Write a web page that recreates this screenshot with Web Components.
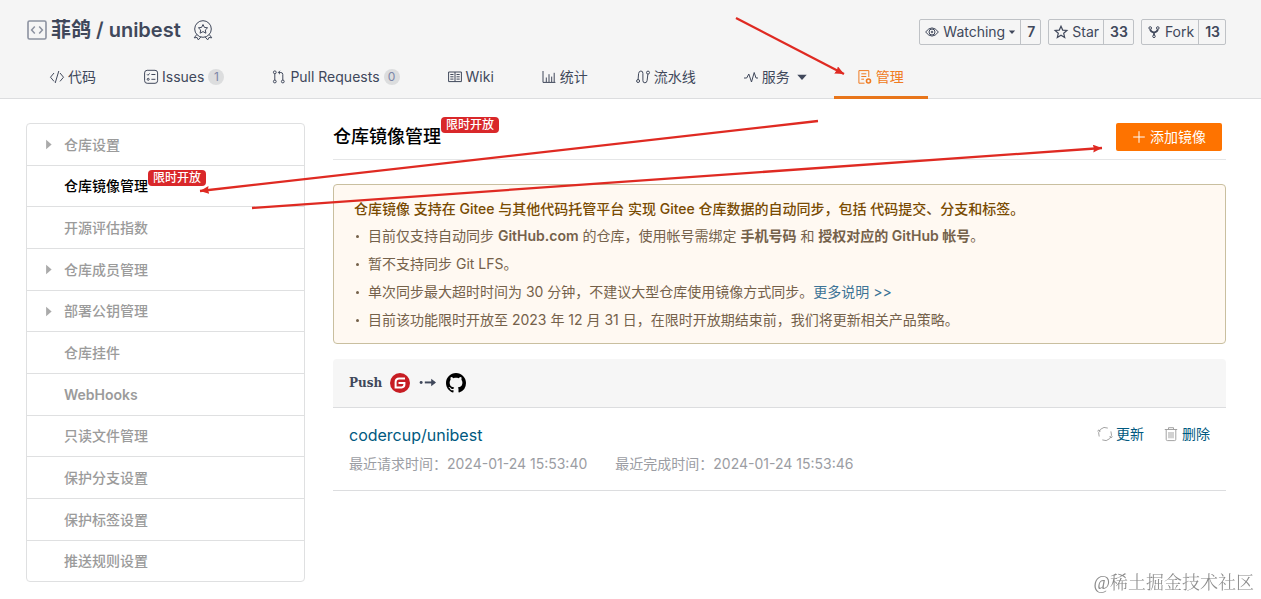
<!DOCTYPE html>
<html lang="zh-CN">
<head>
<meta charset="utf-8">
<title>仓库镜像管理 - 菲鸽/unibest</title>
<style>
  body {
    margin: 0;
    background: #fff;
    color: #40485b;
    font-family: Inter, "Noto Sans CJK SC", sans-serif;
    font-size: 14px;
    line-height: 20px;
  }
  .page {
    display: flex;
    align-items: flex-start;
    gap: 28px;
    padding: 24px 35px 16px 26px;
  }
  side-menu { flex: 0 0 279px; }
  main { flex: 1; min-width: 0; }
</style>
</head>
<body>
<repo-header></repo-header>
<div class="page">
  <side-menu></side-menu>
  <main>
    <page-title>仓库镜像管理</page-title>
    <mirror-notice>
      <span slot="title">仓库镜像 支持在 Gitee 与其他代码托管平台 实现 Gitee 仓库数据的自动同步，包括 代码提交、分支和标签。</span>
    </mirror-notice>
    <mirror-list></mirror-list>
  </main>
</div>
<pointer-arrows></pointer-arrows>
<water-mark>@稀土掘金技术社区</water-mark>

<script>
const ICONS = {
  repo: `<rect x="1" y="1" width="18" height="18" rx="1.5" stroke-width="1.6"/><path d="M7.800 6.500 4.600 10l3.200 3.500M12.200 6.500l3.200 3.500-3.200 3.500" stroke-width="1.500"/>`,
  medal: `<circle cx="10" cy="9" r="8.300"/><path d="m10 4.500 1.400 2.900 3.200.4-2.300 2.200.6 3.200-2.900-1.600-2.900 1.600.6-3.200-2.300-2.200 3.200-.4z"/><path d="m3.800 14.500-2.600 3.300 2.900-.3 1.200 2.400 2.600-3M16.200 14.500l2.600 3.300-2.900-.3-1.200 2.400-2.600-3"/>`,
  code: `<path d="M4 3 .5 7.200 4 11.400M10 3l3.500 4.200L10 11.400M8.800 1 5.200 13"/>`,
  issues: `<rect x=".6" y=".3" width="13" height="13" rx="2.600"/><path d="m3 4.300 1 1 1.600-1.900M7.400 4.500h4M7.400 9.300h4"/><circle cx="4.200" cy="9.300" r="1"/>`,
  pull: `<circle cx="2.800" cy="2.300" r="1.400"/><circle cx="2.800" cy="11.500" r="1.400"/><circle cx="10.800" cy="11.500" r="1.400"/><path d="M2.800 3.700v6.400M10.800 10.100V4.500q0-2-2-2H6.500M8 .8 6.300 2.500 8 4.200"/>`,
  wiki: `<path d="M.6 2h12.800v9.600H.6zM7 2v9.600M2.300 4.500h3.200M2.300 6.800h3.200M2.300 9.100h3.200M8.500 4.500h3.200M8.500 6.800h3.200M8.500 9.100h3.200"/>`,
  stats: `<path d="M1 1v11.400h12.400M4.300 12V7.500M7 12V4.200M9.700 12V6.600M12.200 12V2.800"/>`,
  pipeline: `<circle cx="2.100" cy="11" r="1.500"/><circle cx="12" cy="2.600" r="1.500"/><path d="M2.100 9.500 2.600 3.500Q3 1 4.900 1q2 0 2 2.300v7.300q0 2.200 2 2.200 1.900 0 2.200-2.200l.8-6.500"/>`,
  pulse: `<path d="M0 8h2.700L4.800 4l2.700 8 2.700-9.500L12 8h2"/>`,
  manage: `<path d="M10.800 7V.6H.9v12.600H6.500M3.300 3.800h5M3.300 6.500h5M3.300 9.200h2.700"/><circle cx="10.500" cy="11" r="2" stroke-width="1.600"/>`,
  eye: `<path d="M.6 7Q7-1.200 13.400 7 7 15.200.6 7z"/><circle cx="7" cy="7" r="3"/><circle cx="7" cy="7" r=".8"/>`,
  star: `<path d="m7 1.200 1.700 3.900 4.200.4-3.200 2.800 1 4.200L7 10.300l-3.700 2.200 1-4.200L1.100 5.500l4.200-.4z" stroke-width="1.200"/>`,
  fork: `<circle cx="3.200" cy="3" r="1.300"/><circle cx="10.800" cy="3" r="1.300"/><circle cx="7" cy="11.300" r="1.300"/><path d="M3.200 4.300Q3.500 6.500 7 7.600q3.500-1.100 3.800-3.300M7 7.600v2.600" stroke-width="1.800"/>`,
  plus: `<path d="M7 1.200v11.600M1.200 7h11.600"/>`,
  refresh: `<path d="M1.200 9.500A6.400 6.400 0 0 1 9.800 1.100M12.900 4.400A6.400 6.400 0 0 1 4.300 12.900M-.6 4.200 1 2.900l1.200 1.700M11.700 9.200l1.400 1.800 1.400-1.500" stroke-width=".9"/>`,
  trash: `<path d="M.8 2.500h12.400M4.500 2.300V.7h5v1.600M2.200 2.700v9.700q0 1.200 1.200 1.200h7.200q1.200 0 1.200-1.200V2.700M5 5v6.300M7 5v6.300M9 5v6.300" stroke-width=".9"/>`,
  caret: `<path d="M1.500 4.500h11L7 10.500z" fill="currentColor" stroke="none"/>`,
  right: `<path d="M4 1v12L11 7z" fill="currentColor" stroke="none"/>`,
  arrow: `<circle cx="1" cy="6.500" r="1.300" fill="currentColor" stroke="none"/><path d="M4.200 6.500h8.500" stroke-width="1.700"/><path d="M9.800 3.200v6.600L14 6.500z" fill="currentColor" stroke="none"/>`,
  gitee: `<circle cx="10" cy="10" r="10" fill="#c71d23" stroke="none"/><path d="M15 5.600H9.200Q5.600 5.600 5.600 9.200v5.200h6q2.800 0 2.800-2.800V9.900H8.500" stroke="#fff" stroke-width="2"/>`,
  github: `<path fill="#000" stroke="none" transform="scale(1.25)" d="M8 0C3.580 0 0 3.580 0 8c0 3.540 2.290 6.530 5.470 7.590.4.070.55-.17.55-.38 0-.19-.01-.82-.01-1.490-2.010.37-2.530-.49-2.690-.94-.09-.23-.48-.94-.82-1.130-.28-.15-.68-.52-.01-.53.63-.01 1.080.58 1.230.82.72 1.210 1.870.87 2.330.66.07-.52.28-.87.51-1.070-1.780-.2-3.640-.89-3.640-3.950 0-.87.31-1.590.82-2.150-.08-.2-.36-1.020.08-2.120 0 0 .67-.21 2.200.82.64-.18 1.320-.27 2-.27s1.360.09 2 .27c1.530-1.040 2.200-.82 2.200-.82.44 1.100.16 1.920.08 2.120.51.56.82 1.270.82 2.150 0 3.070-1.870 3.750-3.650 3.950.29.25.54.73.54 1.480 0 1.070-.01 1.930-.01 2.200 0 .21.15.46.55.38A8.010 8.010 0 0 0 16 8c0-4.420-3.580-8-8-8z"/>`,
};
const LARGE = ["repo", "medal", "gitee", "github"];

class UiIcon extends HTMLElement {
  constructor() {
    super();
    this.attachShadow({ mode: "open" });
  }
  connectedCallback() {
    const name = this.getAttribute("name");
    const box = LARGE.includes(name) ? 20 : 14;
    this.shadowRoot.innerHTML = `
    <style>
    :host{
        display:block;
        flex:none;
        width:var(--size, 14px);
        height:var(--size, 14px)
    }
    svg{
        display:block;
        width:100%;
        height:100%;
        overflow:visible
    }
    </style>
    <svg viewBox="0 0 ${box} ${box}" fill="none" stroke="currentColor" aria-hidden="true">${ICONS[name]}</svg>`;
  }
}
customElements.define("ui-icon", UiIcon);

class FeatureBadge extends HTMLElement {
  constructor() {
    super();
    this.attachShadow({ mode: "open" });
    this.shadowRoot.innerHTML = `
    <style>
    :host{
        display:block;
        padding:0 5px;
        border-radius:4px;
        background:#d9282a;
        color:#fff;
        font-size:12px;
        font-weight:500;
        line-height:16px
    }
    </style>
    <slot></slot>`;
  }
}
customElements.define("feature-badge", FeatureBadge);

class NavTab extends HTMLElement {
  constructor() {
    super();
    this.attachShadow({ mode: "open" });
  }
  connectedCallback() {
    const count = this.getAttribute("count");
    this.shadowRoot.innerHTML = `
    <style>
    :host{
        display:block
    }
    a{
        display:flex;
        align-items:center;
        gap:4px;
        height:39px;
        padding:0 24px;
        border-bottom:3px solid transparent;
        color:#40485b;
        text-decoration:none;
        white-space:nowrap
    }
    :host([active]) a{
        border-color:#e8751a;
        color:#f07b22
    }
    .count{
        min-width:8px;
        padding:0 4px;
        border-radius:8px;
        background:#dcddde;
        color:#7c86a8;
        font-size:12px;
        line-height:16px;
        text-align:center
    }
    .caret{
        --size:12px;
        margin:0 2px
    }
    </style>
    <a href="#">
        <ui-icon name="${this.getAttribute("icon")}"></ui-icon>
        <slot></slot>
        ${count ? `<span class="count">${count}</span>` : ""}
        ${this.hasAttribute("menu") ? `<ui-icon class="caret" name="caret"></ui-icon>` : ""}
    </a>`;
  }
}
customElements.define("nav-tab", NavTab);

class CountButton extends HTMLElement {
  constructor() {
    super();
    this.attachShadow({ mode: "open" });
  }
  connectedCallback() {
    this.shadowRoot.innerHTML = `
    <style>
    :host{
        display:flex;
        border:1px solid #bfc2c6;
        border-radius:2px
    }
    button{
        display:flex;
        align-items:center;
        gap:4px;
        height:24px;
        padding:0 4px 0 5px;
        border:0;
        background:transparent;
        color:#40485b;
        font:inherit;
        cursor:pointer
    }
    .caret{
        --size:8px;
        margin-left:-1px
    }
    a{
        padding:0 5px 0 6px;
        border-left:1px solid #bfc2c6;
        color:#40485b;
        font-weight:600;
        line-height:24px;
        text-decoration:none
    }
    </style>
    <button type="button">
        <ui-icon name="${this.getAttribute("icon")}"></ui-icon>
        <slot></slot>
        ${this.hasAttribute("menu") ? `<ui-icon class="caret" name="caret"></ui-icon>` : ""}
    </button>
    <a href="#">${this.getAttribute("count")}</a>`;
  }
}
customElements.define("count-button", CountButton);

class RepoHeader extends HTMLElement {
  constructor() {
    super();
    this.attachShadow({ mode: "open" });
    this.shadowRoot.innerHTML = `
    <style>
    :host{
        display:block;
        padding:19px 35px 0 26px;
        border-bottom:1px solid #dcdddf;
        background:#f5f5f5
    }
    .top{
        display:flex;
        align-items:flex-start;
        height:26px
    }
    h1{
        display:flex;
        align-items:center;
        flex:1;
        gap:4px;
        margin:0;
        padding-left:1px;
        font-size:20px;
        font-weight:600;
        line-height:22px
    }
    h1 ui-icon{
        --size:20px;
        color:#8c92a0
    }
    h1 .medal{
        margin-left:8px;
        color:#40485b
    }
    h1 a{
        color:inherit;
        text-decoration:none
    }
    .actions{
        display:flex;
        gap:7px
    }
    nav{
        display:flex;
        margin:12px 0 -1px
    }
    </style>
    <div class="top">
        <h1>
            <ui-icon name="repo"></ui-icon>
            <a href="#">菲鸽 / unibest</a>
            <ui-icon class="medal" name="medal"></ui-icon>
        </h1>
        <div class="actions">
            <count-button icon="eye" count="7" menu>Watching</count-button>
            <count-button icon="star" count="33">Star</count-button>
            <count-button icon="fork" count="13">Fork</count-button>
        </div>
    </div>
    <nav>
        <nav-tab icon="code">代码</nav-tab>
        <nav-tab icon="issues" count="1">Issues</nav-tab>
        <nav-tab icon="pull" count="0">Pull Requests</nav-tab>
        <nav-tab icon="wiki">Wiki</nav-tab>
        <nav-tab icon="stats">统计</nav-tab>
        <nav-tab icon="pipeline">流水线</nav-tab>
        <nav-tab icon="pulse" menu>服务</nav-tab>
        <nav-tab icon="manage" active>管理</nav-tab>
    </nav>`;
  }
}
customElements.define("repo-header", RepoHeader);

const MENU = [
  { text: "仓库设置", children: true },
  { text: "仓库镜像管理", active: true, badge: "限时开放" },
  { text: "开源评估指数" },
  { text: "仓库成员管理", children: true },
  { text: "部署公钥管理", children: true },
  { text: "仓库挂件" },
  { text: "WebHooks" },
  { text: "只读文件管理" },
  { text: "保护分支设置" },
  { text: "保护标签设置" },
  { text: "推送规则设置" },
];

class SideMenu extends HTMLElement {
  constructor() {
    super();
    this.attachShadow({ mode: "open" });
    this.shadowRoot.innerHTML = `
    <style>
    :host{
        display:block;
        box-sizing:border-box;
        border:1px solid #dfe0e1;
        border-radius:4px
    }
    ul{
        margin:0;
        padding:0;
        list-style:none
    }
    li + li{
        border-top:1px solid #dfe0e1
    }
    a{
        display:grid;
        grid-template-columns:21px auto 1fr;
        align-items:center;
        padding-left:16px;
        color:#9b9b9b;
        font-weight:500;
        line-height:41px;
        text-decoration:none
    }
    li:nth-child(3n+2) a{
        line-height:40px
    }
    span{
        grid-column:2
    }
    .latin{
        font-weight:600
    }
    ui-icon{
        --size:11px;
        color:#aaa
    }
    .active{
        color:#000
    }
    feature-badge{
        align-self:start;
        justify-self:start;
        margin-top:4px
    }
    </style>
    <nav><ul>
    ${MENU.map(
      (m) => `<li><a href="#" class="${m.active ? "active" : ""}">
        ${m.children ? `<ui-icon name="right"></ui-icon>` : ""}
        <span class="${m.text === "WebHooks" ? "latin" : ""}">${m.text}</span>
        ${m.badge ? `<feature-badge>${m.badge}</feature-badge>` : ""}
    </a></li>`
    ).join("")}
    </ul></nav>`;
  }
}
customElements.define("side-menu", SideMenu);

class PageTitle extends HTMLElement {
  constructor() {
    super();
    this.attachShadow({ mode: "open" });
    this.shadowRoot.innerHTML = `
    <style>
    :host{
        display:flex;
        align-items:flex-start;
        justify-content:space-between;
        height:36px;
        border-bottom:1px solid #e5e6e7
    }
    .title{
        display:flex;
        align-items:center
    }
    h2{
        margin:0;
        color:#000;
        font-size:18px;
        font-weight:500;
        line-height:28px
    }
    feature-badge{
        align-self:flex-start;
        margin-top:-6px
    }
    button{
        display:flex;
        align-items:center;
        gap:4px;
        height:28px;
        margin-right:4px;
        padding:0 16px;
        border:0;
        border-radius:2px;
        background:#fe7300;
        color:#fff;
        font:inherit;
        cursor:pointer
    }
    </style>
    <div class="title">
        <h2><slot></slot></h2>
        <feature-badge>限时开放</feature-badge>
    </div>
    <button type="button"><ui-icon name="plus"></ui-icon>添加镜像</button>`;
  }
}
customElements.define("page-title", PageTitle);

class MirrorNotice extends HTMLElement {
  constructor() {
    super();
    this.attachShadow({ mode: "open" });
    this.shadowRoot.innerHTML = `
    <style>
    :host{
        display:block;
        margin:24px 0 15px;
        padding:11px 20px 9px;
        border:1px solid #c9bf9f;
        border-radius:4px;
        background:#fff9f2;
        color:#75614a
    }
    h3{
        margin:0;
        color:#794b02;
        font-size:14px;
        font-weight:500;
        line-height:26px
    }
    ul{
        margin:0;
        padding:0;
        list-style:none
    }
    li{
        display:flex;
        align-items:center;
        line-height:28px
    }
    li::before{
        content:"";
        flex:none;
        width:3px;
        height:3px;
        margin:0 9px 0 2px;
        border-radius:50%;
        background:currentColor
    }
    b{
        font-weight:600
    }
    a{
        color:#3c7396;
        text-decoration:none
    }
    </style>
    <h3><slot name="title"></slot></h3>
    <ul>
        <li><div>目前仅支持自动同步 <b>GitHub.com</b> 的仓库，使用帐号需绑定 <b>手机号码</b> 和 <b>授权对应的 GitHub 帐号</b>。</div></li>
        <li><div>暂不支持同步 Git LFS。</div></li>
        <li><div>单次同步最大超时时间为 30 分钟，不建议大型仓库使用镜像方式同步。<a href="#">更多说明 &gt;&gt;</a></div></li>
        <li><div>目前该功能限时开放至 2023 年 12 月 31 日，在限时开放期结束前，我们将更新相关产品策略。</div></li>
    </ul>`;
  }
}
customElements.define("mirror-notice", MirrorNotice);

class MirrorList extends HTMLElement {
  constructor() {
    super();
    this.attachShadow({ mode: "open" });
    this.shadowRoot.innerHTML = `
    <style>
    :host{
        display:block
    }
    header{
        display:flex;
        align-items:center;
        gap:8px;
        height:48px;
        padding:0 16px;
        border-bottom:1px solid #dcdddf;
        border-radius:4px 4px 0 0;
        background:#f6f6f6
    }
    header strong{
        font-family:"DejaVu Serif", serif;
        font-size:12px
    }
    header ui-icon{
        --size:20px
    }
    header .to{
        --size:16px;
        margin:0 2px
    }
    article{
        display:flex;
        align-items:flex-start;
        justify-content:space-between;
        padding:16px;
        border-bottom:1px solid #dcdddf
    }
    a{
        color:#005980;
        text-decoration:none
    }
    .name{
        display:block;
        font-size:16px;
        line-height:22px
    }
    .times{
        display:flex;
        gap:28px;
        margin-top:8px;
        color:#9b9da3
    }
    .actions{
        display:flex;
        gap:20px
    }
    .actions a{
        display:flex;
        align-items:center;
        gap:4px
    }
    .actions ui-icon{
        color:#999
    }
    </style>
    <header>
        <strong>Push</strong>
        <ui-icon name="gitee"></ui-icon>
        <ui-icon class="to" name="arrow"></ui-icon>
        <ui-icon name="github"></ui-icon>
    </header>
    <article>
        <div>
            <a class="name" href="#">codercup/unibest</a>
            <div class="times">
                <span>最近请求时间：2024-01-24 15:53:40</span>
                <span>最近完成时间：2024-01-24 15:53:46</span>
            </div>
        </div>
        <div class="actions">
            <a href="#"><ui-icon name="refresh"></ui-icon>更新</a>
            <a href="#"><ui-icon name="trash"></ui-icon>删除</a>
        </div>
    </article>`;
  }
}
customElements.define("mirror-list", MirrorList);

// red arrows drawn over the page
class PointerArrows extends HTMLElement {
  constructor() {
    super();
    this.attachShadow({ mode: "open" });
    this.shadowRoot.innerHTML = `
    <style>
    :host{
        position:absolute;
        top:0;
        left:0;
        pointer-events:none
    }
    svg{
        display:block
    }
    </style>
    <svg width="1110" height="220" fill="none" stroke="#df2a22" stroke-width="2.300" aria-hidden="true">
        <defs>
            <marker id="head" markerUnits="userSpaceOnUse" markerWidth="10" markerHeight="8" refX="9" refY="4" orient="auto">
                <path d="M0 0 9 4 0 8 1 4z" fill="#df2a22" stroke="none"/>
            </marker>
        </defs>
        <path d="M736 18 844 74" marker-end="url(#head)"/>
        <path d="M818 121 200 191" marker-end="url(#head)"/>
        <path d="M252 208 1102 148" marker-end="url(#head)"/>
    </svg>`;
  }
}
customElements.define("pointer-arrows", PointerArrows);

class WaterMark extends HTMLElement {
  constructor() {
    super();
    this.attachShadow({ mode: "open" });
    this.shadowRoot.innerHTML = `
    <style>
    :host{
        position:fixed;
        right:7px;
        bottom:4px;
        color:#8b8b8b;
        font-family:"Liberation Serif", "Noto Serif CJK SC", "Noto Sans CJK SC", serif;
        font-size:18px;
        font-weight:300;
        line-height:24px;
        pointer-events:none
    }
    </style>
    <slot></slot>`;
  }
}
customElements.define("water-mark", WaterMark);
</script>
</body>
</html>
